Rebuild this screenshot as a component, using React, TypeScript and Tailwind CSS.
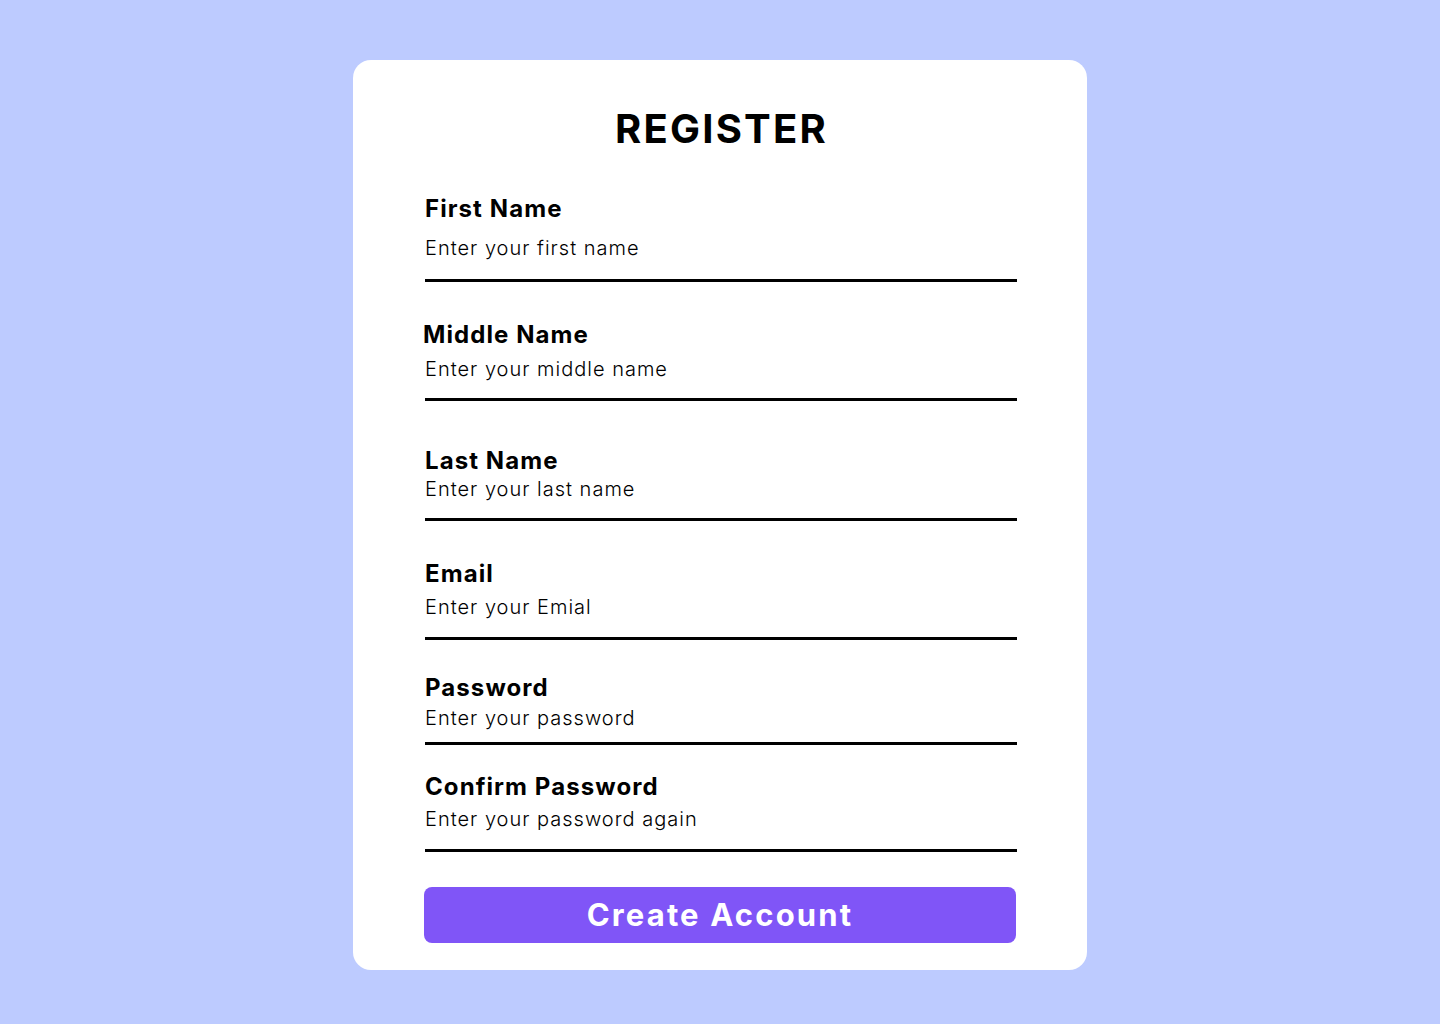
const fields = [
  {
    label: 'First Name',
    placeholder: 'Enter your first name',
    wrap: 'mt-[41px]',
    labelCls: '',
    inputCls: 'mt-[13px]',
    lineCls: 'mt-[19px]',
  },
  {
    label: 'Middle Name',
    placeholder: 'Enter your middle name',
    wrap: 'mt-[38px]',
    labelCls: '-ml-[2px]',
    inputCls: 'mt-[8px]',
    lineCls: 'mt-[17px]',
  },
  {
    label: 'Last Name',
    placeholder: 'Enter your last name',
    wrap: 'mt-[45px]',
    labelCls: '',
    inputCls: 'mt-[2px]',
    lineCls: 'mt-[17px]',
  },
  {
    label: 'Email',
    placeholder: 'Enter your Emial',
    wrap: 'mt-[38px]',
    labelCls: '',
    inputCls: 'mt-[7px]',
    lineCls: 'mt-[18px]',
  },
  {
    label: 'Password',
    placeholder: 'Enter your password',
    wrap: 'mt-[33px]',
    labelCls: '',
    inputCls: 'mt-[4px]',
    lineCls: 'mt-[12px]',
  },
  {
    label: 'Confirm Password',
    placeholder: 'Enter your password again',
    wrap: 'mt-[27px]',
    labelCls: '',
    inputCls: 'mt-[6px]',
    lineCls: 'mt-[18px]',
  },
];

export default function App() {
  return (
    <div className="min-h-screen bg-[#bdcbff] flex justify-center pt-[60px] font-['Inter',sans-serif]">
      <form className="w-[734px] h-[910px] bg-white rounded-[18px] pt-[45px] pl-[72px] pr-[69px]">
        <h1 className="text-center text-[40px] leading-[48px] font-bold tracking-[0.055em] text-black">
          REGISTER
        </h1>

        {fields.map((field) => (
          <div key={field.label} className={field.wrap}>
            <label className={`block text-[24px] leading-[29px] font-bold tracking-[0.045em] text-black ${field.labelCls}`}>
              {field.label}
            </label>
            <input
              type="text"
              placeholder={field.placeholder}
              className={`block w-[592px] p-0 text-[20px] leading-[24px] font-light tracking-[0.05em] bg-transparent outline-none placeholder:text-black ${field.inputCls}`}
            />
            <div className={`w-[592px] h-[3px] bg-black ${field.lineCls}`} />
          </div>
        ))}

        <button
          type="button"
          className="mt-[35px] w-[592px] h-[56px] -ml-[1px] rounded-[8px] bg-[#8055f7] text-white text-[31px] leading-[36px] font-bold tracking-[0.07em]"
        >
          Create Account
        </button>
      </form>
    </div>
  );
}
